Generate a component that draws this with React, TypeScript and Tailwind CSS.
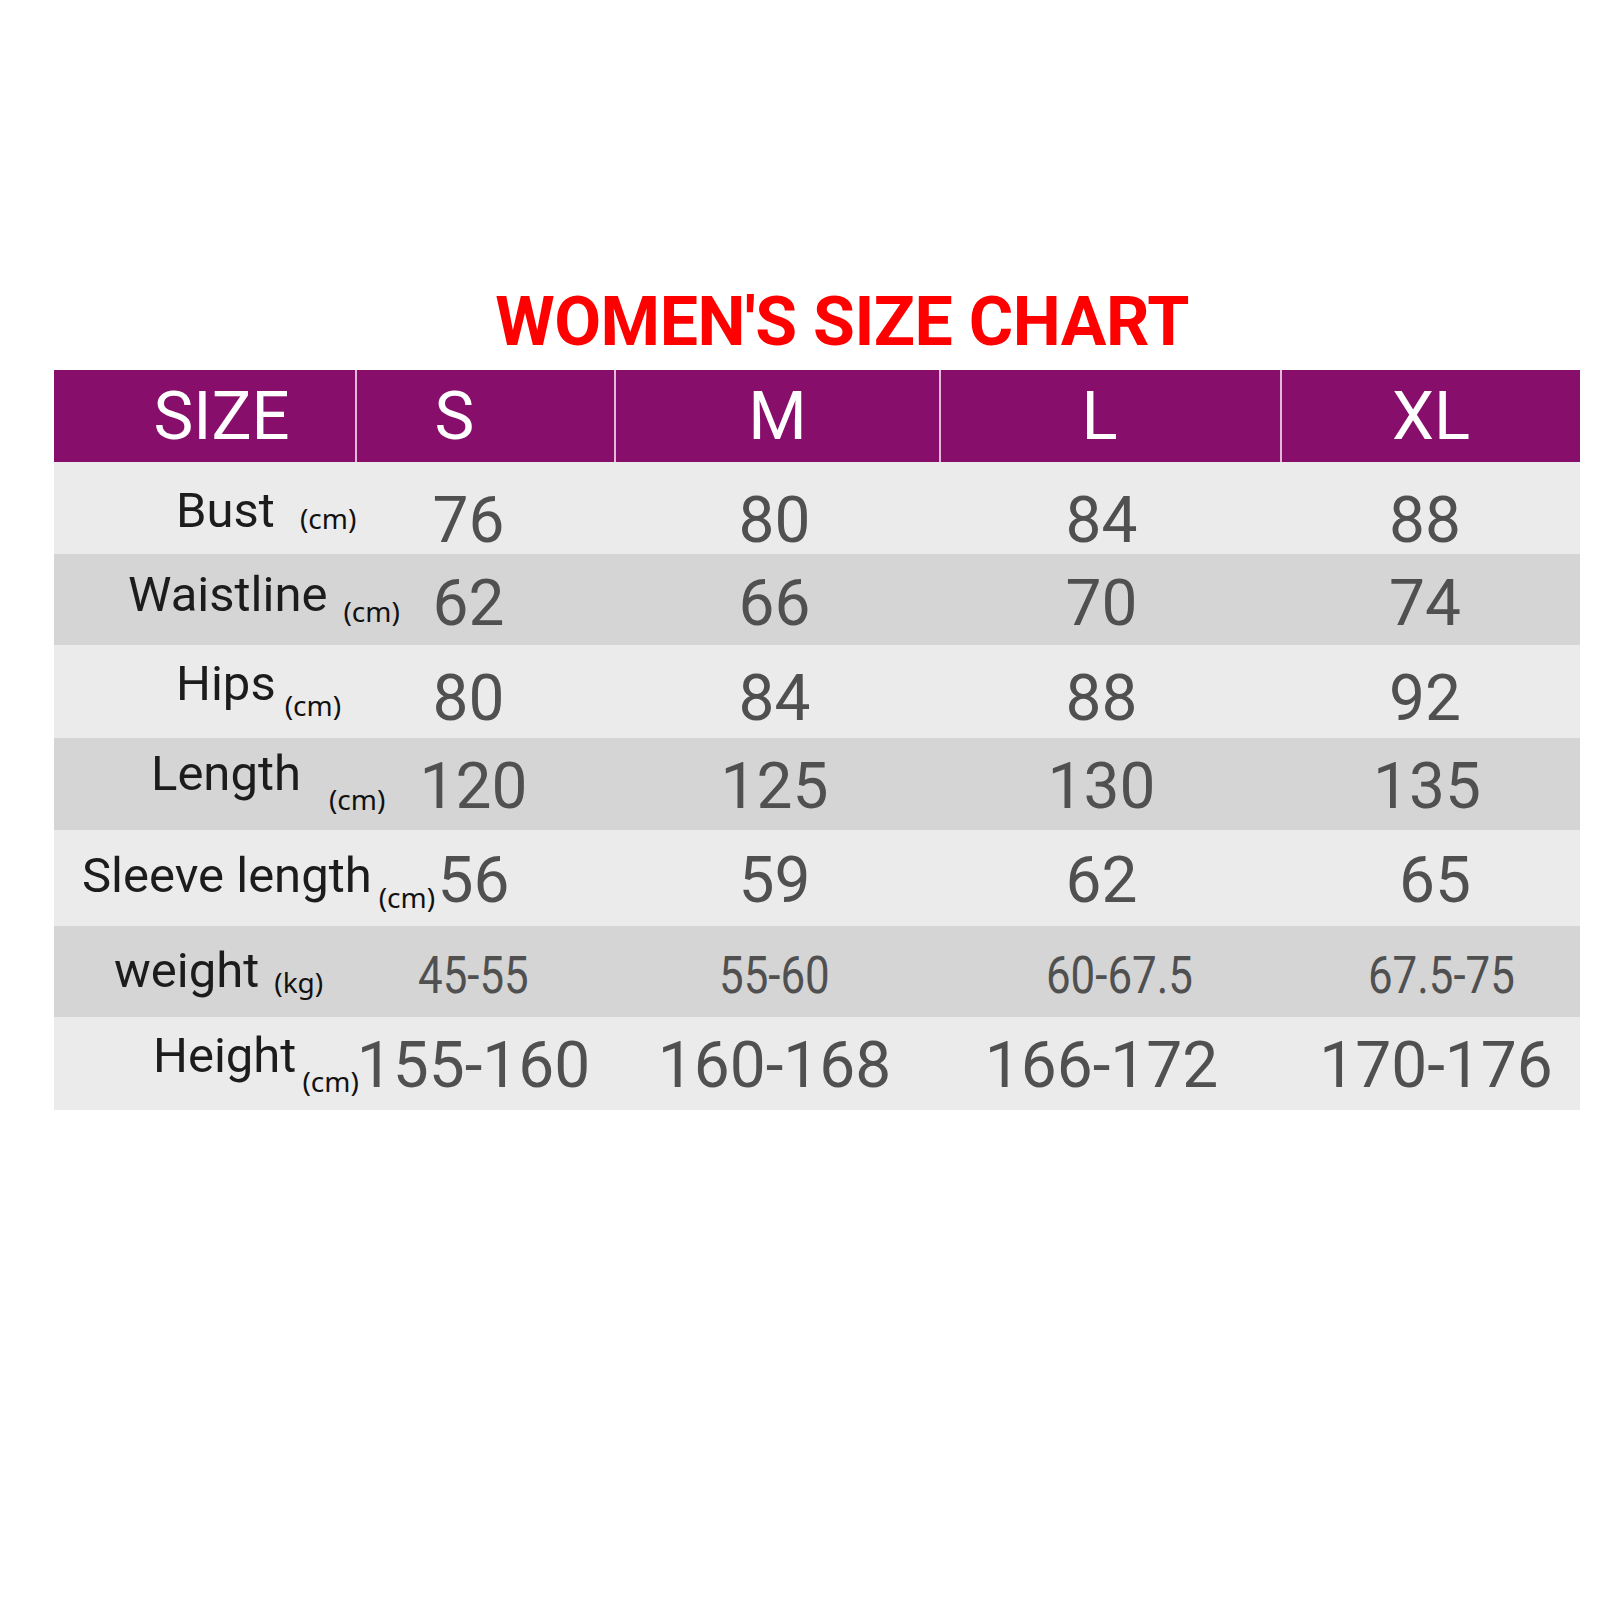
// App.tsx -- women's size chart: red title, purple header band, striped grey rows.

type Row = {
  label: string;
  unit: string;
  h: string;
  bg: string;
  labelPad: string;
  unitPos: string;
  valuePad: string;
  narrow?: boolean;
  cells: [string, string][];
};

const COLS = "grid grid-cols-[301px_259px_325px_341px_300px]";

const LIGHT = "bg-[#ebebeb]";
const DARK = "bg-[#d5d5d5]";

const ROWS: Row[] = [
  {
    label: "Bust",
    unit: "(cm)",
    h: "h-[92px]",
    bg: LIGHT,
    labelPad: "pt-[24px] pl-[122px]",
    unitPos: "ml-[25px] align-[-2px]",
    valuePad: "pt-[27px]",
    cells: [
      ["76", "pr-[32px]"],
      ["80", "pr-[4px]"],
      ["84", "pr-[16px]"],
      ["88", "pr-[10px]"],
    ],
  },
  {
    label: "Waistline",
    unit: "(cm)",
    h: "h-[91px]",
    bg: DARK,
    labelPad: "pt-[16px] pl-[74px]",
    unitPos: "ml-[16px] align-[-11px]",
    valuePad: "pt-[18px]",
    cells: [
      ["62", "pr-[32px]"],
      ["66", "pr-[4px]"],
      ["70", "pr-[16px]"],
      ["74", "pr-[10px]"],
    ],
  },
  {
    label: "Hips",
    unit: "(cm)",
    h: "h-[93px]",
    bg: LIGHT,
    labelPad: "pt-[14px] pl-[122px]",
    unitPos: "ml-[9px] align-[-16px]",
    valuePad: "pt-[22px]",
    cells: [
      ["80", "pr-[32px]"],
      ["84", "pr-[4px]"],
      ["88", "pr-[16px]"],
      ["92", "pr-[10px]"],
    ],
  },
  {
    label: "Length",
    unit: "(cm)",
    h: "h-[92px]",
    bg: DARK,
    labelPad: "pt-[11px] pl-[97px]",
    unitPos: "ml-[28px] align-[-20px]",
    valuePad: "pt-[17px]",
    cells: [
      ["120", "pr-[22px]"],
      ["125", "pr-[4px]"],
      ["130", "pr-[16px]"],
      ["135", "pr-[6px]"],
    ],
  },
  {
    label: "Sleeve length",
    unit: "(cm)",
    h: "h-[96px]",
    bg: LIGHT,
    labelPad: "pt-[21px] pl-[28px]",
    unitPos: "ml-[7px] align-[-16px]",
    valuePad: "pt-[19px]",
    cells: [
      ["56", "pr-[22px]"],
      ["59", "pr-[4px]"],
      ["62", "pr-[16px]"],
      ["65", "pl-[10px]"],
    ],
  },
  {
    label: "weight",
    unit: "(kg)",
    h: "h-[91px]",
    bg: DARK,
    labelPad: "pt-[20px] pl-[60px]",
    unitPos: "ml-[15px] align-[-6px]",
    valuePad: "pt-[24px]",
    narrow: true,
    cells: [
      ["45-55", "pr-[22px]"],
      ["55-60", "pr-[4px]"],
      ["60-67.5", "pl-[20px]"],
      ["67.5-75", "pl-[22px]"],
    ],
  },
  {
    label: "Height",
    unit: "(cm)",
    h: "h-[93px]",
    bg: LIGHT,
    labelPad: "pt-[14px] pl-[99px]",
    unitPos: "ml-[6px] align-[-20px]",
    valuePad: "pt-[17px]",
    cells: [
      ["155-160", "pr-[22px]"],
      ["160-168", "pr-[4px]"],
      ["166-172", "pr-[16px]"],
      ["170-176", "pl-[12px]"],
    ],
  },
];

const HEAD: [string, string][] = [
  ["SIZE", "pl-[34px]"],
  ["S", "pr-[62px] border-l-2 border-[#e2bad6]"],
  ["M", "border-l-2 border-[#e2bad6]"],
  ["L", "pr-[22px] border-l-2 border-[#e2bad6]"],
  ["XL", "border-l-2 border-[#e2bad6]"],
];

function ChartRow({ row }: { row: Row }) {
  return (
    <div className={`${COLS} ${row.h} ${row.bg}`}>
      <div className={`whitespace-nowrap text-[49px] leading-none text-[#1c1c1c] ${row.labelPad}`}>
        {row.label}
        <span
          className={`inline-block font-['Noto_Sans',sans-serif] text-[28px] leading-none text-[#111] ${row.unitPos}`}
        >
          {row.unit}
        </span>
      </div>
      {row.cells.map(([v, pad], i) => (
        <div key={i} className={`text-center leading-none text-[#505050] ${row.valuePad} ${pad}`}>
          {row.narrow ? (
            <span className="inline-block scale-x-[0.86] text-[51px]">{v}</span>
          ) : (
            <span className="text-[64px]">{v}</span>
          )}
        </div>
      ))}
    </div>
  );
}

export default function App() {
  return (
    <div className="h-[1600px] w-[1600px] bg-white pt-[288px] font-['Roboto',sans-serif]">
      <div className="ml-[54px] w-[1526px]">
        <h1 className="pl-[50px] text-center text-[68px] font-bold leading-none tracking-[-0.5px] text-[#ff0000]">
          WOMEN'S SIZE CHART
        </h1>
        <div className={`${COLS} mt-[14px] h-[92px] bg-[#870e6b]`}>
          {HEAD.map(([t, cls]) => (
            <div key={t} className={`flex items-center justify-center text-[67px] leading-none text-white ${cls}`}>
              {t}
            </div>
          ))}
        </div>
        {ROWS.map((r) => (
          <ChartRow key={r.label} row={r} />
        ))}
      </div>
    </div>
  );
}
